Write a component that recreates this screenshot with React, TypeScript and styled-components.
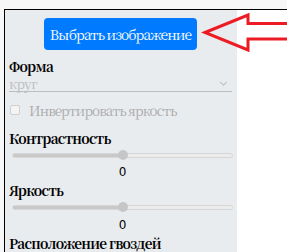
import React from "react";
import styled, { createGlobalStyle } from "styled-components";

const serif = `"Noto Serif CJK JP", "Liberation Serif", serif`;

const GlobalStyle = createGlobalStyle`
  html, body {
    margin: 0;
    padding: 0;
    background-color: #f7f7f7;
    font-family: ${serif};
    overflow: hidden;
  }
`;

const Frame = styled.div`
  position: relative;
  display: flex;
  margin: 9px 0 0 4px;
  height: 300px;
  border-top: 1px solid #000;
  border-left: 1px solid #000;
  background-color: #fff;
`;

const Sidebar = styled.div`
  display: flex;
  flex-direction: column;
  box-sizing: border-box;
  width: 232px;
  padding: 8px 5px 0 4px;
  background-color: #e9ecef;
`;

const PickButton = styled.button`
  align-self: center;
  height: 32px;
  padding: 0 6px;
  border: none;
  border-radius: 4px;
  background-color: #007bff;
  color: #fff;
  font-family: ${serif};
  font-size: 13.8px;
  letter-spacing: -0.9px;
  cursor: pointer;
`;

const Label = styled.div<{ $top?: number }>`
  margin-top: ${(p) => p.$top ?? 0}px;
  font-size: 13.5px;
  letter-spacing: -0.7px;
  line-height: 18px;
  font-weight: bold;
  color: #000;
`;

const SelectBox = styled.div`
  display: flex;
  align-items: center;
  justify-content: space-between;
  height: 16px;
  border-bottom: 1px solid #bdbdbd;
  color: #bdbdbd;
  font-size: 13.5px;
  letter-spacing: -0.6px;
  line-height: 16px;
`;

const Chevron = styled.svg`
  width: 9px;
  height: 5px;
  margin-right: 4px;
`;

const CheckRow = styled.label`
  display: flex;
  align-items: center;
  gap: 9px;
  margin-top: 9px;
  margin-left: 1px;
  color: #aaa;
  font-size: 13.5px;
  letter-spacing: -0.9px;
  line-height: 18px;
`;

const CheckBox = styled.span`
  box-sizing: border-box;
  width: 10px;
  height: 10px;
  border: 1px solid #cfcfcf;
  border-radius: 2px;
  background-color: #f4f4f4;
`;

const Slider = styled.input.attrs({ type: "range", disabled: true })`
  -webkit-appearance: none;
  appearance: none;
  display: block;
  width: 221px;
  height: 10px;
  margin: 3px 0 0 3px;
  background: transparent;

  &::-webkit-slider-runnable-track {
    height: 5px;
    border-radius: 3px;
    box-sizing: border-box;
    border: 1px solid #d6d6d6;
    background: linear-gradient(to right, #c9c9c9 50%, #ececec 50%);
  }

  &::-webkit-slider-thumb {
    -webkit-appearance: none;
    width: 10px;
    height: 10px;
    margin-top: -3.5px;
    border-radius: 50%;
    background-color: #c6c6c6;
  }
`;

const Value = styled.div<{ $top?: number }>`
  margin-top: ${(p) => p.$top ?? 5}px;
  padding-left: 4px;
  text-align: center;
  font-family: "DejaVu Sans", sans-serif;
  font-size: 12px;
  line-height: 14px;
  color: #000;
`;

const Arrow = styled.svg`
  position: absolute;
  left: 195px;
  top: 2px;
  width: 92px;
  height: 42px;
`;

export default function App() {
  return (
    <>
      <GlobalStyle />
      <Frame>
        <Sidebar>
          <PickButton>Выбрать изображение</PickButton>
          <Label $top={7}>Форма</Label>
          <SelectBox>
            <span>круг</span>
            <Chevron viewBox="0 0 10 6">
              <path d="M1 1 L5 5 L9 1" fill="none" stroke="#c4c4c4" strokeWidth="1.5" />
            </Chevron>
          </SelectBox>
          <CheckRow>
            <CheckBox />
            Инвертировать яркость
          </CheckRow>
          <Label $top={10}>Контрастность</Label>
          <Slider defaultValue={50} />
          <Value>0</Value>
          <Label $top={2}>Яркость</Label>
          <Slider defaultValue={50} />
          <Value $top={6}>0</Value>
          <Label $top={2}>Расположение гвоздей</Label>
        </Sidebar>
        <Arrow viewBox="195 10 92 42">
          <polygon
            points="200,30.5 243,13 243,21.5 284,21.5 284,37 243,37 243,48"
            fill="none"
            stroke="#ed1c24"
            strokeWidth="3"
            strokeLinejoin="miter"
          />
        </Arrow>
      </Frame>
    </>
  );
}
